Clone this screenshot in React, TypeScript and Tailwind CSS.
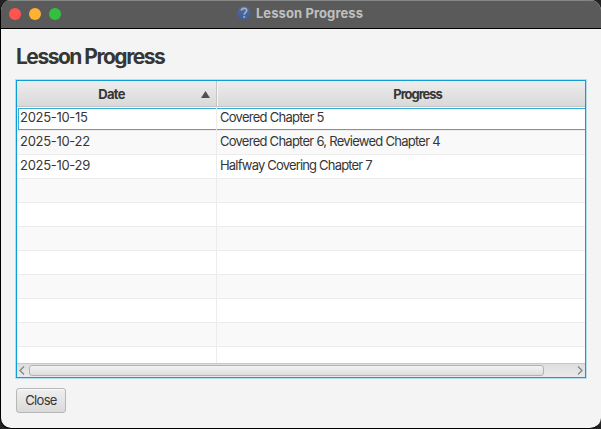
const rows = [
  { date: '2025-10-15', progress: 'Covered Chapter 5', gap: 'tracking-[-0.73px]' },
  { date: '2025-10-22', progress: 'Covered Chapter 6, Reviewed Chapter 4', gap: 'tracking-[-0.74px]' },
  { date: '2025-10-29', progress: 'Halfway Covering Chapter 7', gap: 'tracking-[-0.82px]' },
];

function TitleBar() {
  return (
    <header className="relative flex h-[29px] shrink-0 items-center justify-center border-b border-black bg-[#5a5a5a] pr-[2px] shadow-[inset_0_1px_0_#858786]">
      <div className="absolute left-2 top-2 flex gap-2">
        <span className="size-3 rounded-full bg-[#ff5450]" />
        <span className="size-3 rounded-full bg-[#ffb132]" />
        <span className="size-3 rounded-full bg-[#34c03f]" />
      </div>
      <svg className="mr-[5px] mt-[-2px] size-[14px]" viewBox="0 0 14 14">
        <defs>
          <linearGradient id="help" x1="0" y1="0" x2="0" y2="1">
            <stop offset="0" stopColor="#526a94" />
            <stop offset="1" stopColor="#3c5f9f" />
          </linearGradient>
        </defs>
        <circle cx="7" cy="7" r="6.8" fill="url(#help)" />
        <path d="M4.4 4.7C4.5 3.1 5.6 2.4 7.1 2.4c1.6 0 2.6.9 2.6 2.1 0 1.9-2.5 2-2.5 4.3" fill="none" stroke="#a3aec0" strokeWidth="1.7" />
        <circle cx="7.2" cy="11" r="1.1" fill="#a3aec0" />
      </svg>
      <span className="mt-[-2px] text-[13px] font-bold leading-4 tracking-[0.1px] text-[#c0c0c0]">Lesson Progress</span>
    </header>
  );
}

function Row({ index }: { index: number }) {
  const row = rows[index];
  return (
    <div className={`flex h-6 shrink-0 border-b border-[#ececec] ${index % 2 ? 'bg-[#f9f9f9]' : 'bg-white'} ${index === 0 ? 'relative' : ''}`}>
      {index === 0 && <div className="absolute left-px right-0 top-px h-[22px] border border-r-0 border-[#35aedb]" />}
      <div className="relative w-[200px] shrink-0 border-r border-[#ececec] pl-[3px] leading-[20px]">
        <span className="tracking-[-0.3px]">{row?.date}</span>
      </div>
      <div className="relative grow pl-[3px] leading-[20px]">
        <span className={row?.gap}>{row?.progress}</span>
      </div>
    </div>
  );
}

function Chevron({ d }: { d: string }) {
  return (
    <svg className="h-[9px] w-[6px]" viewBox="0 0 6 9">
      <path d={d} fill="none" stroke="#858585" strokeWidth="1.3" />
    </svg>
  );
}

export default function App() {
  return (
    <div className="h-[429px] w-[601px] overflow-hidden bg-[#222] font-[Inter,sans-serif] text-[#363636]">
      <div className="flex h-[429px] flex-col overflow-hidden rounded-[11px] border-b border-l border-black bg-[#f4f4f4]">
        <TitleBar />
        <main className="flex flex-col items-start pl-[15px] pr-[15px] pt-[15px]">
          <h1 className="h-[36px] text-[21px] font-bold leading-[26px] tracking-[-1.5px]">Lesson Progress</h1>
          <section className="flex h-[298px] w-[570px] flex-col border border-[#0c9ed9] shadow-[0_0_0_1px_#b5deed]">
            <div className="flex h-[27px] shrink-0 overflow-hidden border-b border-white text-[13px] font-bold leading-[26px]">
              <div className="relative h-[26px] w-[200px] shrink-0 border-b border-r border-[#c5c5c5] bg-linear-to-b from-[#ededed] to-[#d9d9d9] pr-[10px] text-center tracking-[-0.7px] shadow-[inset_0_1px_0_#f7f7f7]">
                Date
                <svg className="absolute right-[6px] top-[10px] h-[7px] w-[9px]" viewBox="0 0 9 7">
                  <path d="M4.5 0 9 7H0z" fill="#505050" />
                </svg>
              </div>
              <div className="h-[26px] w-[401px] shrink-0 border-b border-[#c5c5c5] bg-linear-to-b from-[#ededed] to-[#d9d9d9] text-center tracking-[-1.05px] shadow-[inset_1px_1px_0_#f7f7f7]">Progress</div>
            </div>
            <div className="-mt-px flex h-[256px] shrink-0 flex-col overflow-hidden text-[13px]">
              {Array.from({ length: 11 }, (_, i) => <Row key={i} index={i} />)}
            </div>
            <div className="flex h-[14px] items-center border-t border-[#c8c8c8] bg-linear-to-b from-[#dedede] to-[#eaeaea] pl-[2px] pr-[2px]">
              <Chevron d="M5 .5 1 4.5l4 4" />
              <div className="ml-[4px] h-[11px] w-[515px] rounded-[3px] border border-[#b2b2b2] bg-linear-to-b from-[#f3f3f3] to-[#dddddd]" />
              <div className="ml-auto flex"><Chevron d="m1 .5 4 4-4 4" /></div>
            </div>
          </section>
          <button className="mt-[10px] h-[25px] w-[50px] rounded-[3px] border border-[#b7b7b7] bg-linear-to-b from-[#efefef] to-[#dadada] pb-px text-[13px] leading-[22px] tracking-[-0.7px] shadow-[inset_0_1px_0_#fafafa]">Close</button>
        </main>
      </div>
    </div>
  );
}
